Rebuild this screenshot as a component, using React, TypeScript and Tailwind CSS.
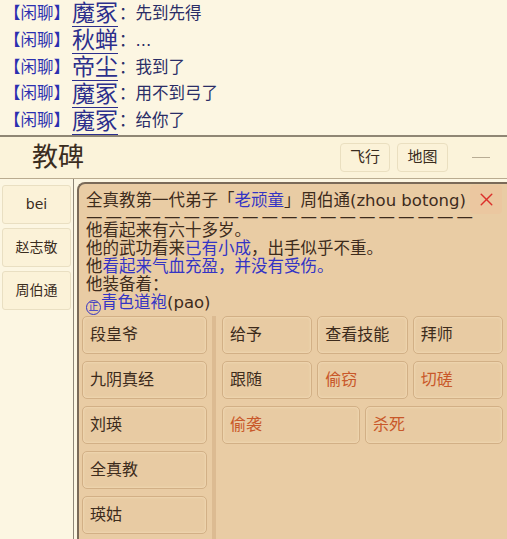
import { X } from "lucide-react";

const chats = [
  { name: "魔冢", msg: "先到先得" },
  { name: "秋蝉", msg: "..." },
  { name: "帝尘", msg: "我到了" },
  { name: "魔冢", msg: "用不到弓了" },
  { name: "魔冢", msg: "给你了" },
];

const npcs = ["bei", "赵志敬", "周伯通"];
const targets = ["段皇爷", "九阴真经", "刘瑛", "全真教", "瑛姑"];

function Btn({ label, red, className = "" }: { label: string; red?: boolean; className?: string }) {
  return (
    <div
      className={`h-[38px] flex items-center px-[7px] rounded-[5px] border border-[#d2b086] bg-[#e8cba3] shadow-[inset_0_0_3px_rgba(255,240,210,0.6)] text-[16px] ${
        red ? "text-[#c8582a]" : "text-[#3d2b1c]"
      } ${className}`}
    >
      {label}
    </div>
  );
}

export default function App() {
  return (
    <div
      className="w-[507px] h-[539px] overflow-hidden bg-[#fcf6e2] flex flex-col"
      style={{ fontFamily: '"DejaVu Sans", "Noto Sans CJK SC", sans-serif' }}
    >
      <div className="flex flex-col pt-[1px] h-[135px]">
        {chats.map((c, i) => (
          <div key={i} className="h-[27px] flex items-center pl-[4px] whitespace-nowrap">
            <span className="text-[16.5px] text-[#2b2fb0]">【闲聊】</span>
            <span className="ml-[2px] text-[23px] leading-[25px] text-[#2c2f8c] border-b border-[#2c2f8c]">{c.name}</span>
            <span className="text-[16.5px] text-[#2a2d66] ml-[1px]">：{c.msg}</span>
          </div>
        ))}
      </div>
      <div className="h-[2px] bg-[#8f8674]" />
      <div className="h-[42px] flex items-center bg-[#fbf3da] border-b border-[#b9ab90]">
        <span className="ml-[32px] text-[26px] text-[#3a2c1e]">教碑</span>
        <div className="ml-auto flex gap-[7px]">
          <div className="w-[50px] h-[29px] flex items-center justify-center rounded-[4px] border border-[#eadfc0] bg-[#fbf2d8] text-[15px] text-[#3a2c1e]">飞行</div>
          <div className="w-[51px] h-[29px] flex items-center justify-center rounded-[4px] border border-[#eadfc0] bg-[#fbf2d8] text-[15px] text-[#3a2c1e]">地图</div>
        </div>
        <div className="w-[18px] h-[1px] bg-[#b8ac94] ml-[24px] mr-[17px]" />
      </div>
      <div className="flex flex-1 min-h-0">
        <div className="w-[74px] shrink-0 border-r border-[#8e8677] flex flex-col gap-[4px] pt-[6px] px-[2px]">
          {npcs.map((n) => (
            <div key={n} className="h-[39px] flex items-center justify-center rounded-[3px] border border-[#e9dfc2] bg-[#fbf2d8] text-[14px] text-[#3a2c1e]">
              {n}
            </div>
          ))}
        </div>
        <div className="flex-1 min-w-0 ml-[3px] mt-[3px] bg-[#e9cca4] rounded-tl-[8px] border-t-2 border-l-2 border-[#7a6a58] flex flex-col">
          <div className="flex items-start pl-[7px] pt-[7px] relative">
            <div className="flex-1 text-[16.5px] leading-[18px] text-[#3d2b1c] whitespace-nowrap">
              <div className="leading-[20px]">
                全真教第一代弟子「<span className="text-[#3434c4]">老顽童</span>」周伯通(zhou botong)
              </div>
              <div className="leading-[11px] h-[11px] tracking-[3px] text-[#3d2b1c] overflow-hidden">
                ————————————————————
              </div>
              <div>他看起来有六十多岁。</div>
              <div>
                他的武功看来<span className="text-[#3434c4]">已有小成</span>，出手似乎不重。
              </div>
              <div>
                他<span className="text-[#3434c4]">看起来气血充盈，并没有受伤。</span>
              </div>
              <div>他装备着：</div>
              <div className="h-[18px]">
                <span className="text-[#3434c4]">
                  <span className="inline-flex items-center justify-center w-[15px] h-[15px] rounded-full border border-[#3434c4] text-[10px] leading-none align-[-2px]">正</span>
                  青色道袍
                </span>
                (pao)
              </div>
            </div>
            <div className="absolute right-[5px] top-[1px] w-[32px] h-[29px] flex items-center justify-center bg-[#ebc7a0] rounded-[4px]">
              <X size={21} strokeWidth={1.7} color="#dc2f2a" />
            </div>
          </div>
          <div className="flex flex-1 mt-[4px] pl-[3px]">
            <div className="w-[125px] shrink-0 flex flex-col gap-[7px]">
              {targets.map((t) => (
                <Btn key={t} label={t} />
              ))}
            </div>
            <div className="w-[4px] shrink-0 bg-[#dcbb92] ml-[5px] mr-[6px]" />
            <div className="flex-1 pr-[4px] flex flex-col gap-[7px]">
              <div className="flex gap-[5px]">
                <Btn label="给予" className="flex-1" />
                <Btn label="查看技能" className="flex-1" />
                <Btn label="拜师" className="flex-1" />
              </div>
              <div className="flex gap-[5px]">
                <Btn label="跟随" className="flex-1" />
                <Btn label="偷窃" red className="flex-1" />
                <Btn label="切磋" red className="flex-1" />
              </div>
              <div className="flex gap-[5px]">
                <Btn label="偷袭" red className="flex-1" />
                <Btn label="杀死" red className="flex-1" />
              </div>
            </div>
          </div>
        </div>
      </div>
    </div>
  );
}
